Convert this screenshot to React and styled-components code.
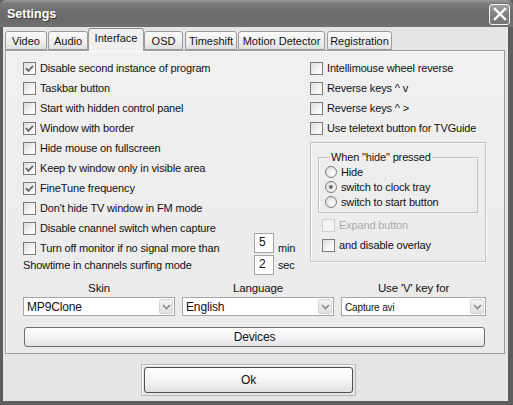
import React from "react";
import styled, { createGlobalStyle } from "styled-components";

const GlobalStyle = createGlobalStyle`
  html, body {
    margin: 0;
    padding: 0;
    background: #5e5e5e;
  }
  body {
    font-family: "Liberation Sans", Arial, sans-serif;
    font-size: 11px;
    letter-spacing: -0.15px;
    color: #111;
  }
`;

const tabs = [
  { name: "Video", width: 42, gap: 0 },
  { name: "Audio", width: 40, gap: 1 },
  { name: "Interface", width: 56, gap: 0, active: true },
  { name: "OSD", width: 39, gap: 0 },
  { name: "Timeshift", width: 52, gap: 2 },
  { name: "Motion Detector", width: 87, gap: 1 },
  { name: "Registration", width: 65, gap: 2 },
];

const leftOptions = [
  { text: "Disable second instance of program", checked: true },
  { text: "Taskbar button" },
  { text: "Start with hidden control panel" },
  { text: "Window with border", checked: true },
  { text: "Hide mouse on fullscreen" },
  { text: "Keep tv window only in visible area", checked: true },
  { text: "FineTune frequency", checked: true },
  { text: "Don't hide TV window in FM mode" },
  { text: "Disable cnannel switch when capture" },
];

const rightOptions = [
  "Intellimouse wheel reverse",
  "Reverse keys ^ v",
  "Reverse keys ^ >",
  "Use teletext button for TVGuide",
];

const radios = [
  { text: "Hide" },
  { text: "switch to clock tray", checked: true },
  { text: "switch to start button" },
];

const selects = [
  { label: "Skin", value: "MP9Clone" },
  { label: "Language", value: "English" },
  { label: "Use 'V' key for", value: "Capture avi", small: true },
];

const Check = ({ checked, disabled }) => (
  <CheckBox $disabled={disabled}>
    {checked && (
      <svg width="9" height="9" viewBox="0 0 9 9">
        <polyline
          points="1,4.2 3.4,6.8 8,1.8"
          fill="none"
          stroke="#6a6a6a"
          strokeWidth="1.9"
        />
      </svg>
    )}
  </CheckBox>
);

const Radio = ({ checked }) => (
  <RadioCircle>{checked && <RadioDot />}</RadioCircle>
);

const App = () => {
  return (
    <>
      <GlobalStyle />
      <Window>
        <TitleBar>
          <Title>Settings</Title>
          <CloseButton>
            <svg width="14" height="14" viewBox="0 0 14 14">
              <path
                d="M2 2 L12 12 M12 2 L2 12"
                stroke="#fff"
                strokeWidth="2.4"
                strokeLinecap="square"
              />
            </svg>
          </CloseButton>
        </TitleBar>
        <Body>
          <TabRow>
            {tabs.map((t) => (
              <Tab key={t.name} $width={t.width} $gap={t.gap} $active={t.active}>
                {t.name}
              </Tab>
            ))}
          </TabRow>
          <Panel>
            <Columns>
              <Column>
                {leftOptions.map((o) => (
                  <CheckRow key={o.text}>
                    <Check checked={o.checked} />
                    <span>{o.text}</span>
                  </CheckRow>
                ))}
                <InputRow>
                  <CheckRow>
                    <Check />
                    <span>Turn off monitor if no signal more than</span>
                  </CheckRow>
                  <NumberBox $raise>5</NumberBox>
                  <Unit>min</Unit>
                </InputRow>
                <InputRow $pull>
                  <PlainLabel>Showtime in channels surfing mode</PlainLabel>
                  <NumberBox>2</NumberBox>
                  <Unit>sec</Unit>
                </InputRow>
              </Column>
              <Column>
                {rightOptions.map((text) => (
                  <CheckRow key={text}>
                    <Check />
                    <span>{text}</span>
                  </CheckRow>
                ))}
                <OuterGroup>
                  <Fieldset>
                    <Legend>When "hide" pressed</Legend>
                    {radios.map((r) => (
                      <RadioRow key={r.text}>
                        <Radio checked={r.checked} />
                        <span>{r.text}</span>
                      </RadioRow>
                    ))}
                  </Fieldset>
                  <CheckRow $disabled>
                    <Check disabled />
                    <span>Expand button</span>
                  </CheckRow>
                  <CheckRow>
                    <Check />
                    <span>and disable overlay</span>
                  </CheckRow>
                </OuterGroup>
              </Column>
            </Columns>
            <SelectGrid>
              {selects.map((s) => (
                <SelectCell key={s.label}>
                  <SelectLabel>{s.label}</SelectLabel>
                  <Select>
                    <SelectValue $small={s.small}>{s.value}</SelectValue>
                    <DropButton>
                      <svg width="9" height="6" viewBox="0 0 9 6">
                        <polyline
                          points="1,1 4.5,4.5 8,1"
                          fill="none"
                          stroke="#8a8a8a"
                          strokeWidth="1.6"
                        />
                      </svg>
                    </DropButton>
                  </Select>
                </SelectCell>
              ))}
            </SelectGrid>
            <WideButton>Devices</WideButton>
          </Panel>
          <Footer>
            <FocusRing>
              <OkButton>Ok</OkButton>
            </FocusRing>
          </Footer>
        </Body>
      </Window>
    </>
  );
};

const Window = styled.div`
  width: 513px;
  height: 405px;
  display: flex;
  flex-direction: column;
  background: #5e5e5e;
  box-sizing: border-box;
  padding-bottom: 4px;
  overflow: hidden;
`;

const TitleBar = styled.div`
  height: 27px;
  flex-shrink: 0;
  display: flex;
  align-items: center;
  justify-content: space-between;
  padding: 0 3px 0 7px;
  background: linear-gradient(
    to bottom,
    #9a9a9a 0%,
    #7c7c7c 12%,
    #6e6e6e 40%,
    #6a6a6a 75%,
    #727272 100%
  );
  border-radius: 6px 6px 0 0;
`;

const Title = styled.div`
  color: #fff;
  font-weight: bold;
  font-size: 12.5px;
  letter-spacing: 0;
  text-shadow: 1px 1px 0 #3a3a3a;
  margin-top: 1px;
`;

const CloseButton = styled.div`
  width: 21px;
  height: 21px;
  box-sizing: border-box;
  border: 1px solid #f2f2f2;
  border-radius: 3px;
  background: linear-gradient(to bottom, #a0a0a0, #808080 50%, #767676);
  display: flex;
  align-items: center;
  justify-content: center;
  margin-top: 1px;
`;

const Body = styled.div`
  flex: 1;
  margin: 0 5px 0 3px;
  padding: 0 3px 0 2px;
  background: #e5e5e5;
  display: flex;
  flex-direction: column;
`;

const TabRow = styled.div`
  display: flex;
  align-items: flex-end;
  height: 23px;
  position: relative;
  z-index: 1;
`;

const Tab = styled.div`
  width: ${(p) => p.$width}px;
  margin-left: ${(p) => p.$gap}px;
  height: ${(p) => (p.$active ? 23 : 19)}px;
  margin-bottom: ${(p) => (p.$active ? -1 : 0)}px;
  box-sizing: border-box;
  border: 1px solid #9c9c9c;
  border-bottom: ${(p) => (p.$active ? "none" : "1px solid #9c9c9c")};
  border-top: 1px solid ${(p) => (p.$active ? "#8a8a8a" : "#9c9c9c")};
  border-radius: 3px 3px 0 0;
  background: ${(p) =>
    p.$active
      ? "#f0f0f0"
      : "linear-gradient(to bottom, #fbfbfb, #ebebeb 70%, #dedede)"};
  display: flex;
  justify-content: center;
  padding-top: 3px;
  font-size: 11px;
  letter-spacing: 0;
  white-space: nowrap;
`;

const Panel = styled.div`
  height: 304px;
  box-sizing: border-box;
  border: 1px solid #9c9c9c;
  background: linear-gradient(to bottom, #f0f0f0, #eaeaea);
  box-shadow: inset 1px 1px 0 #fafafa;
  padding: 7px 17px 6px 17px;
  display: flex;
  flex-direction: column;
`;

const Columns = styled.div`
  display: grid;
  grid-template-columns: 287px 176px;
`;

const Column = styled.div`
  display: flex;
  flex-direction: column;
`;

const CheckRow = styled.div`
  height: 20px;
  display: flex;
  align-items: center;
  gap: 4px;
  white-space: nowrap;
  color: ${(p) => (p.$disabled ? "#ababab" : "#111")};
`;

const CheckBox = styled.div`
  width: 13px;
  height: 13px;
  flex-shrink: 0;
  box-sizing: border-box;
  border: 1px solid ${(p) => (p.$disabled ? "#cfcfcf" : "#7b7b7b")};
  background: ${(p) =>
    p.$disabled
      ? "#f4f4f4"
      : "linear-gradient(135deg, #dcdcdc, #f4f4f4 60%, #ffffff)"};
  display: flex;
  align-items: center;
  justify-content: center;
`;

const InputRow = styled.div`
  display: grid;
  grid-template-columns: 231px 20px auto;
  align-items: center;
  height: 20px;
  margin-top: ${(p) => (p.$pull ? -3 : 0)}px;
`;

const PlainLabel = styled.div`
  white-space: nowrap;
`;

const NumberBox = styled.div`
  width: 20px;
  height: 20px;
  box-sizing: border-box;
  background: #fff;
  border: 1px solid #a5a5a5;
  font-size: 12px;
  padding: 1px 0 0 4px;
  margin-top: ${(p) => (p.$raise ? -10 : 0)}px;
`;

const Unit = styled.div`
  font-size: 11px;
  margin-left: 4px;
`;

const OuterGroup = styled.div`
  margin-top: 4px;
  height: 120px;
  box-sizing: border-box;
  border: 1px solid #c2c2c2;
  box-shadow: inset 1px 1px 0 #fafafa, 1px 1px 0 #fafafa;
  padding: 8px 7px 0 11px;
  display: flex;
  flex-direction: column;
`;

const Fieldset = styled.fieldset`
  margin: 0 0 2px -4px;
  padding: 0 0 3px 6px;
  border: 1px solid #c2c2c2;
  box-shadow: inset 1px 1px 0 #fafafa;
`;

const Legend = styled.legend`
  padding: 0 1px;
  margin-left: 5px;
  font-size: 11px;
  line-height: 13px;
`;

const RadioRow = styled.div`
  height: 15px;
  display: flex;
  align-items: center;
  gap: 4px;
  white-space: nowrap;
`;

const RadioCircle = styled.div`
  width: 12px;
  height: 12px;
  box-sizing: border-box;
  border-radius: 50%;
  border: 1px solid #7f7f7f;
  background: radial-gradient(circle at 65% 65%, #ffffff, #e6e6e6 60%, #d2d2d2);
  display: flex;
  align-items: center;
  justify-content: center;
`;

const RadioDot = styled.div`
  width: 4px;
  height: 4px;
  border-radius: 50%;
  background: #6a6a6a;
`;

const SelectGrid = styled.div`
  display: grid;
  grid-template-columns: 152px 152px 145px;
  column-gap: 7px;
  margin-top: 6px;
`;

const SelectCell = styled.div`
  display: flex;
  flex-direction: column;
`;

const SelectLabel = styled.div`
  text-align: center;
  font-size: 11.5px;
  line-height: 14px;
  margin-bottom: 2px;
`;

const Select = styled.div`
  height: 19px;
  box-sizing: border-box;
  border: 1px solid #a5a5a5;
  background: #fff;
  display: flex;
  align-items: center;
  justify-content: space-between;
  padding: 0 1px 0 3px;
`;

const SelectValue = styled.div`
  font-size: ${(p) => (p.$small ? 10 : 12)}px;
  margin-top: 1px;
`;

const DropButton = styled.div`
  width: 14px;
  height: 15px;
  box-sizing: border-box;
  border: 1px solid #d6d6d6;
  border-radius: 2px;
  background: linear-gradient(to bottom, #f4f4f4, #e0e0e0);
  display: flex;
  align-items: center;
  justify-content: center;
`;

const WideButton = styled.div`
  margin-top: 11px;
  margin-left: 1px;
  width: 461px;
  height: 20px;
  box-sizing: border-box;
  border: 1px solid #6e6e6e;
  border-radius: 3px;
  background: linear-gradient(to bottom, #ffffff, #f2f2f2 60%, #e2e2e2);
  display: flex;
  align-items: center;
  justify-content: center;
  font-size: 12px;
`;

const Footer = styled.div`
  display: flex;
  padding: 10px 0 0 136px;
`;

const FocusRing = styled.div`
  width: 215px;
  height: 32px;
  box-sizing: border-box;
  border: 1px solid #b8b8b8;
  box-shadow: inset 1px 1px 0 #fafafa;
  padding: 2px;
`;

const OkButton = styled.div`
  height: 100%;
  box-sizing: border-box;
  border: 1px solid #505050;
  border-radius: 3px;
  background: linear-gradient(to bottom, #ffffff, #f3f3f3 55%, #e0e0e0);
  display: flex;
  align-items: center;
  justify-content: center;
  font-size: 12px;
`;

export default App;
